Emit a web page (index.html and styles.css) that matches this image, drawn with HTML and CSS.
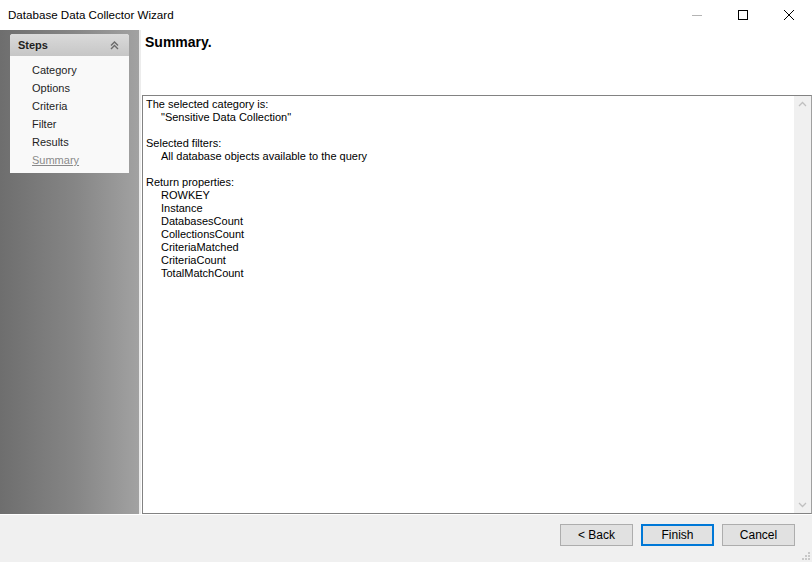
FILE: index.html
```html
<!DOCTYPE html>
<html>
<head>
<meta charset="utf-8">
<title>Database Data Collector Wizard</title>
<link rel="stylesheet" href="styles.css">
</head>
<body>
<div class="window">
  <div class="titlebar">
    <div class="title">Database Data Collector Wizard</div>
    <div class="winbtns">
      <div class="winbtn">
        <svg width="12" height="12" viewBox="0 0 12 12"><path d="M1 6.5h10" stroke="#b4b4b4" stroke-width="1"/></svg>
      </div>
      <div class="winbtn">
        <svg width="12" height="12" viewBox="0 0 12 12"><rect x="1.5" y="1.5" width="9" height="9" fill="none" stroke="#000" stroke-width="1"/></svg>
      </div>
      <div class="winbtn">
        <svg width="12" height="12" viewBox="0 0 12 12"><path d="M1 1L11 11M11 1L1 11" stroke="#000" stroke-width="1"/></svg>
      </div>
    </div>
  </div>
  <div class="main">
    <div class="sidebar">
      <div class="steps">
        <div class="steps-head">
          <span>Steps</span>
          <svg class="chev" width="9" height="9" viewBox="0 0 9 9"><path d="M1 4.5L4.5 1L8 4.5M1 8L4.5 4.5L8 8" fill="none" stroke="#6a6a6a" stroke-width="1.4"/></svg>
        </div>
        <ul class="steps-list">
          <li>Category</li>
          <li>Options</li>
          <li>Criteria</li>
          <li>Filter</li>
          <li>Results</li>
          <li class="current">Summary</li>
        </ul>
      </div>
    </div>
    <div class="content">
      <div class="page-head">Summary.</div>
      <div class="summary-box">
        <div class="summary-text">
          <div>The selected category is:</div>
          <div class="ind">"Sensitive Data Collection"</div>
          <div class="blank"></div>
          <div>Selected filters:</div>
          <div class="ind">All database objects available to the query</div>
          <div class="blank"></div>
          <div>Return properties:</div>
          <div class="ind">ROWKEY</div>
          <div class="ind">Instance</div>
          <div class="ind">DatabasesCount</div>
          <div class="ind">CollectionsCount</div>
          <div class="ind">CriteriaMatched</div>
          <div class="ind">CriteriaCount</div>
          <div class="ind">TotalMatchCount</div>
        </div>
        <div class="scrollbar">
          <svg width="9" height="6" viewBox="0 0 9 6"><path d="M1 5L4.5 1.5L8 5" fill="none" stroke="#c0c0c0" stroke-width="1.3"/></svg>
          <svg width="9" height="6" viewBox="0 0 9 6"><path d="M1 1L4.5 4.5L8 1" fill="none" stroke="#c0c0c0" stroke-width="1.3"/></svg>
        </div>
      </div>
    </div>
  </div>
  <div class="footer">
    <button class="btn">&lt; Back</button>
    <button class="btn primary">Finish</button>
    <button class="btn">Cancel</button>
    <svg class="grip" width="8" height="8" viewBox="0 0 8 8">
      <rect x="6" y="0" width="2" height="2" fill="#c8c8c8"/>
      <rect x="3" y="3" width="2" height="2" fill="#c8c8c8"/>
      <rect x="6" y="3" width="2" height="2" fill="#c8c8c8"/>
      <rect x="0" y="6" width="2" height="2" fill="#c8c8c8"/>
      <rect x="3" y="6" width="2" height="2" fill="#c8c8c8"/>
      <rect x="6" y="6" width="2" height="2" fill="#c8c8c8"/>
    </svg>
  </div>
</div>
</body>
</html>
```
FILE: styles.css
```css
html, body {
  margin: 0;
  padding: 0;
}
body {
  width: 812px;
  height: 562px;
  overflow: hidden;
  background: #ffffff;
  font-family: "Liberation Sans", Arial, sans-serif;
  font-size: 11px;
  color: #000;
}
.window {
  display: flex;
  flex-direction: column;
  width: 812px;
  height: 562px;
}
.titlebar {
  height: 30px;
  flex: none;
  display: flex;
  align-items: center;
  justify-content: space-between;
  background: #fff;
}
.title {
  padding-left: 8px;
  font-size: 11.6px;
  color: #000;
  margin-top: -1px;
}
.winbtns {
  display: flex;
}
.winbtn {
  width: 46px;
  height: 30px;
  display: flex;
  align-items: center;
  justify-content: center;
}
.main {
  flex: none;
  height: 484px;
  display: flex;
}
.sidebar {
  flex: none;
  width: 141px;
  box-sizing: border-box;
  background: linear-gradient(to right, #6e6e6e 0%, #868686 55%, #a2a2a2 100%);
  border-right: 2px solid #ececec;
  padding: 4px 10px 0 10px;
}
.steps {
  width: 119px;
  background: #f9f9f9;
  border-radius: 3px 3px 0 0;
}
.steps-head {
  height: 22px;
  display: flex;
  align-items: center;
  justify-content: space-between;
  padding: 0 10px 0 8px;
  background: linear-gradient(to bottom, #dadada, #c6c6c6);
  border-radius: 3px 3px 0 0;
  font-weight: bold;
  font-size: 11px;
  color: #1e1e1e;
}
.chev {
  display: block;
}
.steps-list {
  list-style: none;
  margin: 0;
  padding: 5px 0 4px 22px;
}
.steps-list li {
  height: 18px;
  line-height: 18px;
  color: #1e1e1e;
}
.steps-list li.current {
  color: #8a8a8a;
  text-decoration: underline;
}
.content {
  flex: 1;
  display: flex;
  flex-direction: column;
  padding-left: 1px;
}
.page-head {
  height: 65px;
  flex: none;
  box-sizing: border-box;
  padding: 4px 0 0 3px;
  font-size: 14px;
  font-weight: bold;
}
.summary-box {
  flex: 1;
  display: flex;
  border: 1px solid #828282;
  border-right-color: #a0a0a0;
  background: #fff;
  min-height: 0;
}
.summary-text {
  flex: 1;
  padding: 2px 0 0 3px;
  line-height: 13px;
}
.summary-text .ind {
  padding-left: 15px;
}
.summary-text .blank {
  height: 13px;
}
.scrollbar {
  width: 17px;
  flex: none;
  background: #f0f0f0;
  display: flex;
  flex-direction: column;
  justify-content: space-between;
  align-items: center;
  padding: 5px 0;
  box-sizing: border-box;
}
.scrollbar svg {
  display: block;
}
.footer {
  flex: 1;
  background: #f0f0f0;
  border-top: 1px solid #ffffff;
  display: flex;
  justify-content: flex-end;
  align-items: flex-start;
  padding: 9px 17px 0 0;
  gap: 8px;
  position: relative;
}
.btn {
  width: 73px;
  height: 22px;
  box-sizing: border-box;
  background: #e1e1e1;
  border: 1px solid #adadad;
  font-family: "Liberation Sans", Arial, sans-serif;
  font-size: 12px;
  color: #000;
  padding: 0;
  margin: 0;
}
.btn.primary {
  border: 2px solid #0078d7;
}
.grip {
  position: absolute;
  right: 2px;
  bottom: 2px;
}
```
